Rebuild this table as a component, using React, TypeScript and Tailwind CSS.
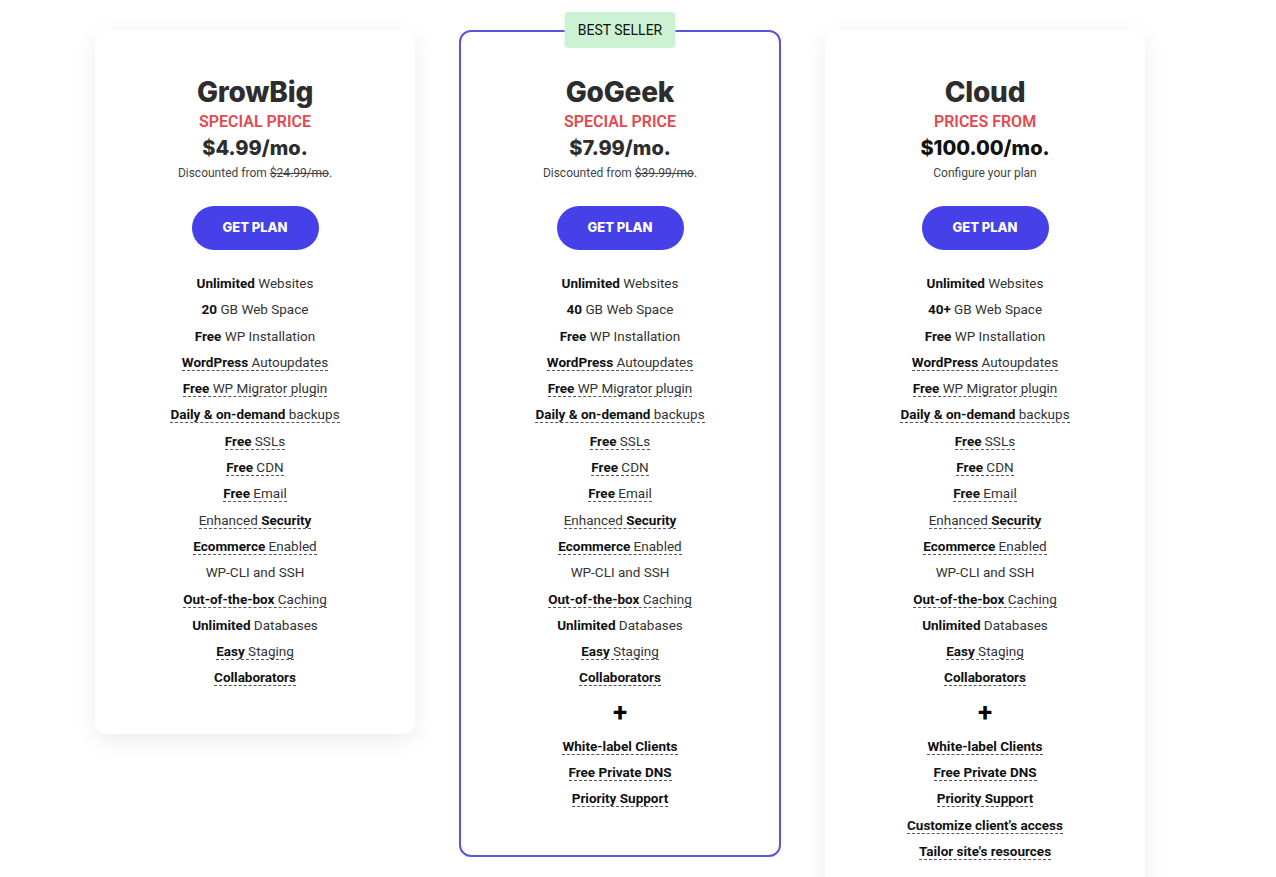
import { Fragment } from "react";

type Feature = { parts: [string, boolean][]; tip?: boolean };

const f = (tip: boolean, ...parts: [string, boolean][]): Feature => ({ parts, tip });

const baseFeatures = (space: string): Feature[] => [
  f(false, ["Unlimited", true], [" Websites", false]),
  f(false, [space, true], [" GB Web Space", false]),
  f(false, ["Free", true], [" WP Installation", false]),
  f(true, ["WordPress", true], [" Autoupdates", false]),
  f(true, ["Free", true], [" WP Migrator plugin", false]),
  f(true, ["Daily & on-demand", true], [" backups", false]),
  f(true, ["Free", true], [" SSLs", false]),
  f(true, ["Free", true], [" CDN", false]),
  f(true, ["Free", true], [" Email", false]),
  f(true, ["Enhanced ", false], ["Security", true]),
  f(true, ["Ecommerce", true], [" Enabled", false]),
  f(false, ["WP-CLI and SSH", false]),
  f(true, ["Out-of-the-box", true], [" Caching", false]),
  f(false, ["Unlimited", true], [" Databases", false]),
  f(true, ["Easy", true], [" Staging", false]),
  f(true, ["Collaborators", true]),
];

const plans = [
  {
    name: "GrowBig",
    label: "SPECIAL PRICE",
    price: "$4.99/mo.",
    note: "old",
    old: "$24.99/mo",
    features: baseFeatures("20"),
    extras: [] as string[],
    featured: false,
  },
  {
    name: "GoGeek",
    label: "SPECIAL PRICE",
    price: "$7.99/mo.",
    note: "old",
    old: "$39.99/mo",
    features: baseFeatures("40"),
    extras: ["White-label Clients", "Free Private DNS", "Priority Support"],
    featured: true,
  },
  {
    name: "Cloud",
    label: "PRICES FROM",
    price: "$100.00/mo.",
    note: "Configure your plan",
    old: "",
    features: baseFeatures("40+"),
    extras: [
      "White-label Clients",
      "Free Private DNS",
      "Priority Support",
      "Customize client's access",
      "Tailor site's resources",
    ],
    featured: false,
  },
];

const heading = { fontFamily: "Inter, 'DejaVu Sans', sans-serif" };

const Line = ({ children, tip }: { children: React.ReactNode; tip?: boolean }) => (
  <li className="leading-[26.3px]">
    <span className={tip ? "border-b border-dashed border-[#555]" : ""}>{children}</span>
  </li>
);

export default function App() {
  return (
    <div
      className="min-h-screen bg-white text-[#222]"
      style={{ fontFamily: "Roboto, 'Liberation Sans', sans-serif" }}
    >
      <div className="flex items-start gap-[44px] pl-[95px] pt-[30px]">
        {plans.map((p) => (
          <div
            key={p.name}
            className={
              p.featured
                ? "relative w-[322px] rounded-[12px] border-2 border-[#5855d8] bg-white pt-[43px] pb-[43px] text-center"
                : "relative w-[320px] rounded-[12px] bg-white pt-[45px] pb-[43px] text-center shadow-[0_6px_22px_rgba(0,0,0,0.08)]"
            }
          >
            {p.featured && (
              <div className="absolute -top-[20px] left-1/2 flex h-[36px] w-[111px] -translate-x-1/2 items-center justify-center rounded-[4px] bg-[#cdf1d3] text-[14px] text-[#111]">
                BEST SELLER
              </div>
            )}
            <h2 className="text-[28px] font-extrabold leading-[34px] tracking-[-0.2px] text-[#2d2d2d]" style={heading}>
              {p.name}
            </h2>
            <div className="mt-[3px] text-[16px] font-semibold leading-[20px] text-[#e5484d]">{p.label}</div>
            <div
              className={
                "mt-[3px] text-[20px] font-extrabold leading-[26px] " +
                (p.featured || p.name === "GrowBig" ? "text-[#2d2d2d]" : "text-[#111]")
              }
              style={heading}
            >
              {p.price}
            </div>
            <div className="mt-[4px] text-[12px] leading-[16px] text-[#444]">
              {p.note === "old" ? (
                <>
                  Discounted from <span className="line-through">{p.old}</span>.
                </>
              ) : (
                p.note
              )}
            </div>
            <button
              className="mx-auto mt-[25px] flex h-[44px] w-[127px] items-center justify-center rounded-full bg-[#4540e8] text-[13px] font-extrabold text-white"
              style={heading}
            >
              GET PLAN
            </button>
            <ul className="mt-[20px] text-[13.5px] font-normal text-[#333]">
              {p.features.map((ft, i) => (
                <Line key={i} tip={ft.tip}>
                  {ft.parts.map(([t, b], j) => (
                    <Fragment key={j}>{b ? <b className="font-bold text-[#111]">{t}</b> : t}</Fragment>
                  ))}
                </Line>
              ))}
            </ul>
            {p.extras.length > 0 && (
              <>
                <div className="flex h-[42px] items-center justify-center text-[26px] font-bold leading-none text-black">
                  +
                </div>
                <ul className="text-[13.5px]">
                  {p.extras.map((e) => (
                    <Line key={e} tip>
                      <b className="font-bold text-[#111]">{e}</b>
                    </Line>
                  ))}
                </ul>
              </>
            )}
          </div>
        ))}
      </div>
    </div>
  );
}
